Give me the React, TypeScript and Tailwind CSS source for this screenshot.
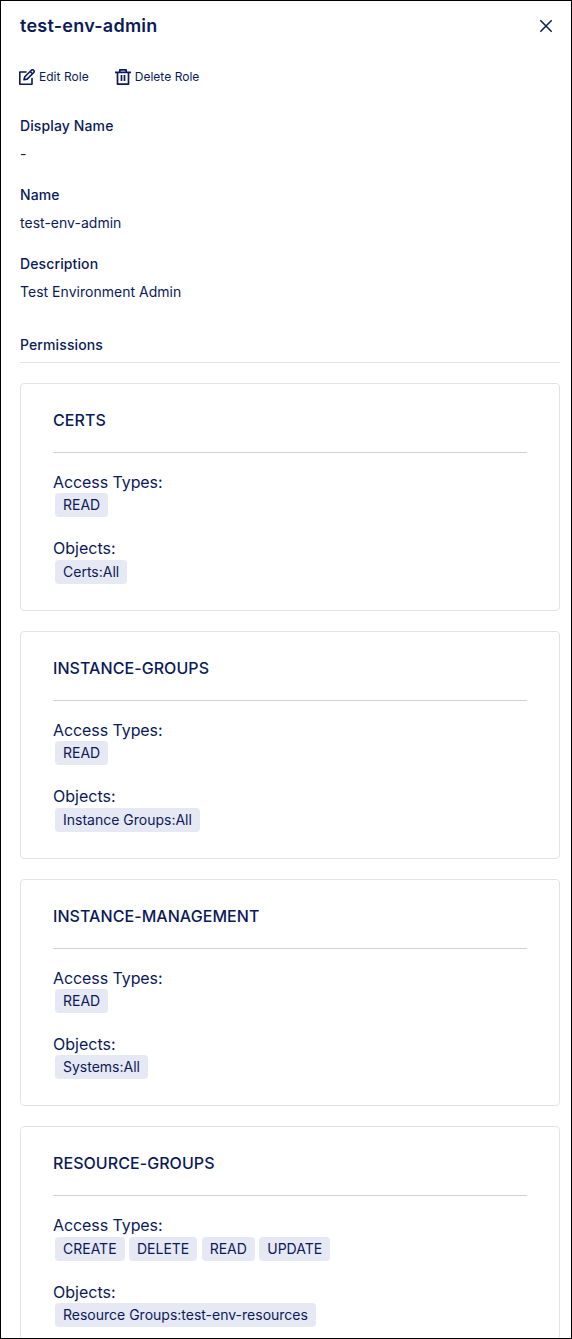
import { ReactNode } from "react";

function Tag({ children }: { children: ReactNode }) {
  return <span className="flex h-6 items-center rounded-[4px] bg-[#e6e8f4] px-2 text-[14px] leading-6">{children}</span>;
}

function Field({ label, value }: { label: string; value: string }) {
  return (
    <div className="mb-6 h-[45px]">
      <div className="text-[14px] font-medium leading-[17px] tracking-[0.12px]">{label}</div>
      <div className="mt-[11px] text-[14px] leading-[17px] tracking-[0.02px]">{value}</div>
    </div>
  );
}

type Permission = { title: string; access: string[]; objects: string[] };

const permissions: Permission[] = [
  { title: "CERTS", access: ["READ"], objects: ["Certs:All"] },
  { title: "INSTANCE-GROUPS", access: ["READ"], objects: ["Instance Groups:All"] },
  { title: "INSTANCE-MANAGEMENT", access: ["READ"], objects: ["Systems:All"] },
  { title: "RESOURCE-GROUPS", access: ["CREATE", "DELETE", "READ", "UPDATE"], objects: ["Resource Groups:test-env-resources"] },
];

function Card({ title, access, objects }: Permission) {
  return (
    <section className="mb-5 h-[227.75px] shrink-0 rounded-[4px] border border-[#e1e3ea] px-8 pt-[26px]">
      <h2 className="h-[43px] border-b border-[#ced1df] text-[16px] font-medium leading-5 tracking-[0.06px]">{title}</h2>
      <div className="mt-[19.1px] text-[16px] leading-5 tracking-[-0.08px]">Access Types:</div>
      <div className="ml-0.5 mt-[1.2px] flex gap-[4.4px]">{access.map((a) => <Tag key={a}>{a}</Tag>)}</div>
      <div className="mt-[21px] text-[16px] leading-5">Objects:</div>
      <div className="ml-0.5 mt-[1.6px] flex gap-[4.4px]">{objects.map((o) => <Tag key={o}>{o}</Tag>)}</div>
    </section>
  );
}

export default function App() {
  return (
    <main className="flex h-[1339px] w-[572px] flex-col overflow-hidden border border-black bg-white pl-[19px] pr-[11px] font-['Inter',sans-serif] text-[#0b1a58]">
      <header className="flex h-[50px] shrink-0 items-center justify-between pr-[7px]">
        <h1 className="text-[18px] font-semibold leading-6 tracking-[0.24px]">test-env-admin</h1>
        <button aria-label="Close">
          <svg width="14" height="14" viewBox="0 0 14 14" fill="none" stroke="currentColor" strokeWidth="1.5"><path d="M1.3 1.3l11.4 11.4M12.7 1.3L1.3 12.7" /></svg>
        </button>
      </header>
      <div className="-ml-px flex h-[52px] shrink-0 items-center gap-[26px] text-[12px] tracking-[0.03px]">
        <button className="flex items-center gap-1">
          <svg width="16" height="16" viewBox="0 0 16 16" fill="none" stroke="currentColor" strokeWidth="1.6" strokeLinejoin="round" strokeLinecap="round"><path d="M7 3H.8v12.2H13V9.5M5 10.8l.8-3L12.4 1.2Q13.5.3 14.6 1.3T14.8 3.5L8.1 10.1 5 10.8zM11.2 2.5l2.3 2.3" /></svg>
          Edit Role
        </button>
        <button className="flex items-center gap-1">
          <svg width="16" height="16" viewBox="0 0 16 16" fill="none" stroke="currentColor" strokeWidth="1.7" strokeLinejoin="round"><path d="M0 3.3h16M4.8 3V.9h6.4V3M2.5 3.5v11.6h11V3.5M6.5 6v6M9.5 6v6" /></svg>
          Delete Role
        </button>
      </div>
      <div className="shrink-0 pt-[14px]">
        <Field label="Display Name" value="-" />
        <Field label="Name" value="test-env-admin" />
        <Field label="Description" value="Test Environment Admin" />
      </div>
      <h2 className="mb-5 mt-3 h-[27px] shrink-0 border-b border-[#e1e3ea] pb-[9px] text-[14px] font-medium leading-[17px] tracking-[0.12px]">Permissions</h2>
      {permissions.map((p) => <Card key={p.title} {...p} />)}
    </main>
  );
}
